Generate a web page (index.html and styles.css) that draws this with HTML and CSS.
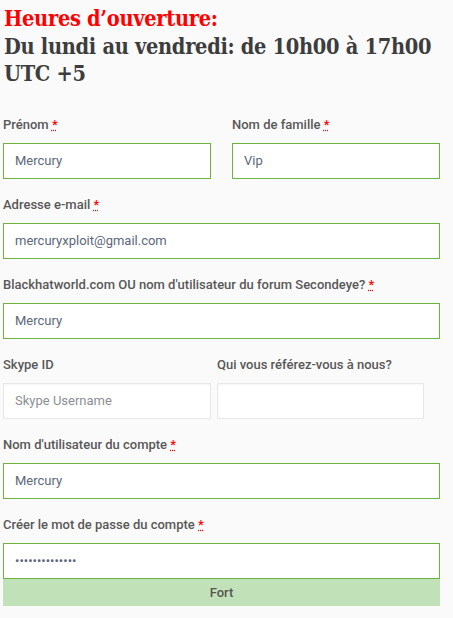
FILE: index.html
```html
<!DOCTYPE html>
<html lang="fr">
<head>
<meta charset="utf-8">
<title>Formulaire</title>
<link rel="stylesheet" href="styles.css">
</head>
<body>
<div class="page">
  <h2 class="hours">
    <span class="hours-title">Heures d’ouverture:</span>
    <span class="hours-text">Du lundi au vendredi: de 10h00 à 17h00 UTC +5</span>
  </h2>
  <form class="form">
    <div class="row row-wide">
      <div class="field">
        <label class="label">Prénom <abbr class="req" title="obligatoire">*</abbr></label>
        <input class="input valid" type="text" value="Mercury">
      </div>
      <div class="field">
        <label class="label">Nom de famille <abbr class="req" title="obligatoire">*</abbr></label>
        <input class="input valid" type="text" value="Vip">
      </div>
    </div>
    <div class="field">
      <label class="label">Adresse e-mail <abbr class="req" title="obligatoire">*</abbr></label>
      <input class="input valid" type="text" value="mercuryxploit@gmail.com">
    </div>
    <div class="field">
      <label class="label">Blackhatworld.com OU nom d'utilisateur du forum Secondeye? <abbr class="req" title="obligatoire">*</abbr></label>
      <input class="input valid" type="text" value="Mercury">
    </div>
    <div class="row row-tight">
      <div class="field">
        <label class="label">Skype ID</label>
        <input class="input plain" type="text" placeholder="Skype Username">
      </div>
      <div class="field">
        <label class="label">Qui vous référez-vous à nous?</label>
        <input class="input plain" type="text">
      </div>
    </div>
    <div class="field">
      <label class="label">Nom d'utilisateur du compte <abbr class="req" title="obligatoire">*</abbr></label>
      <input class="input valid" type="text" value="Mercury">
    </div>
    <div class="field field-last">
      <label class="label">Créer le mot de passe du compte <abbr class="req" title="obligatoire">*</abbr></label>
      <input class="input valid" type="password" value="Mercury123456x">
      <div class="strength">Fort</div>
    </div>
  </form>
</div>
</body>
</html>
```

FILE: styles.css
```css
html, body {
  margin: 0;
  padding: 0;
  background: #fafafa;
}

.page {
  width: 437px;
  padding: 5px 0 0 3px;
  font-family: Roboto, "Liberation Sans", sans-serif;
  color: #555;
}

.hours {
  margin: 0 0 27px 1px;
  font-family: "DejaVu Serif", serif;
  font-stretch: condensed;
  font-weight: bold;
  font-size: 21.6px;
  line-height: 27.5px;
  letter-spacing: -0.3px;
}

.hours-title {
  display: block;
  color: #ff0000;
}

.hours-text {
  display: block;
  color: #3d3d3d;
}

.form {
  display: flex;
  flex-direction: column;
  gap: 16px;
}

.row {
  display: grid;
}

.row-wide {
  grid-template-columns: 208px 208px;
  column-gap: 21px;
}

.row-tight {
  grid-template-columns: 208px 207px;
  column-gap: 6px;
}

.field {
  display: flex;
  flex-direction: column;
}

.label {
  font-size: 13px;
  line-height: 20px;
  font-weight: 500;
  color: #585858;
  margin-bottom: 8px;
}

.req {
  color: #ff0000;
  text-decoration: underline dotted #ff0000;
  cursor: help;
}

.input {
  box-sizing: border-box;
  width: 100%;
  height: 36px;
  margin: 0;
  padding: 0 11px;
  font-family: Roboto, "Liberation Sans", sans-serif;
  font-size: 13px;
  color: #5b677a;
  background: #fff;
  outline: none;
  border-radius: 0;
}

.input.valid {
  border: 1px solid #6cb33f;
}

.input.plain {
  border: 1px solid #e8e8e8;
  box-shadow: inset 0 1px 2px rgba(0, 0, 0, 0.04);
}

.input::placeholder {
  color: #8a8f96;
}

.input[type="password"] {
  font-size: 13px;
  letter-spacing: 0;
}

.strength {
  height: 27px;
  line-height: 27px;
  text-align: center;
  background: #c1e1b8;
  color: #555;
  font-size: 13px;
  font-weight: 500;
}
```
